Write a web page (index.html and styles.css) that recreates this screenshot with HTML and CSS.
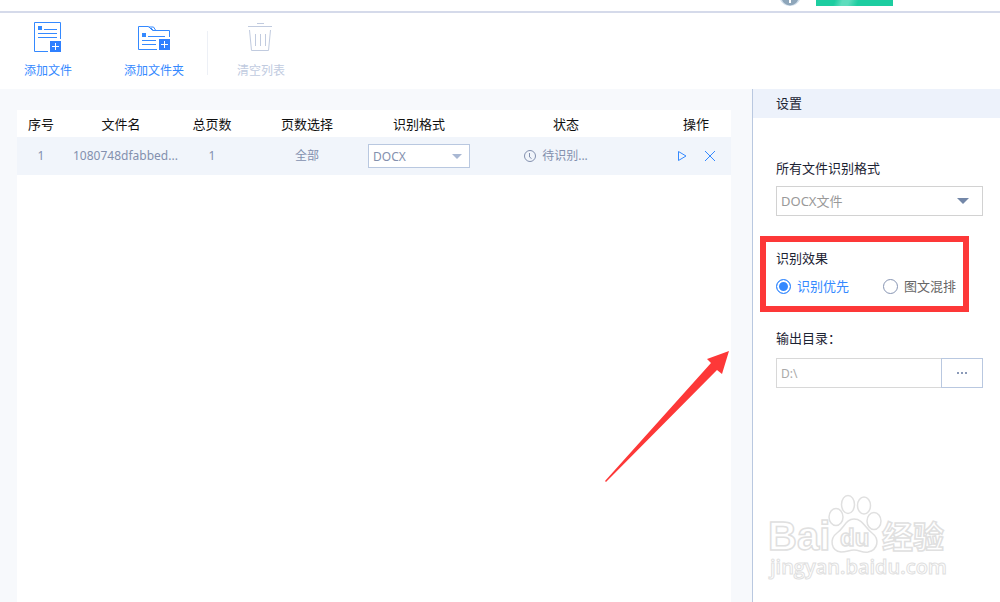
FILE: index.html
```html
<!DOCTYPE html>
<html lang="zh-CN">
<head>
    <meta charset="UTF-8">
    <meta name="viewport" content="width=device-width, initial-scale=1.0">
    <title>文件识别</title>
    <link rel="stylesheet" href="styles.css">
</head>
<body>
    <div class="app">
        <header class="top-bar">
            <svg class="top-badge" width="22" height="6" viewBox="0 0 22 6">
                <circle cx="11" cy="-5" r="11" fill="#d3e0ec"/>
                <circle cx="11" cy="-3" r="8.5" fill="#8ea6ba"/>
                <path d="M10 0h2v3h-2z" fill="#fff"/>
            </svg>
            <div class="top-banner"></div>
        </header>

        <nav class="toolbar">
            <button class="tool">
                <svg width="32" height="32" viewBox="0 0 32 32" fill="none" stroke="#3489ff">
                    <path d="M16 30.500H2.500V1.500H28.500V18"/>
                    <rect x="6" y="5" width="4" height="4" fill="#3489ff" stroke="none"/>
                    <path d="M12 8.500h13M6 12.500h19M6 16.500h19"/>
                    <rect x="18" y="20" width="11" height="11" fill="#2f80ff" stroke="none"/>
                    <path d="M20 25.500h7M23.500 22v7" stroke="#fff"/>
                </svg>
                <span>添加文件</span>
            </button>
            <button class="tool tool-folder">
                <svg width="32" height="32" viewBox="0 0 32 32" fill="none" stroke="#3489ff">
                    <path d="M19 28.500H0.500V5.500H10.500L14.500 9.500H31.500V16"/>
                    <path d="M10.500 6h5l2 3M13 7l2 2"/>
                    <rect x="4" y="12" width="4" height="4" fill="#3489ff" stroke="none"/>
                    <path d="M10 15.500h17M4 19.500h14M4 23.500h14"/>
                    <rect x="21" y="18" width="11" height="11" fill="#2f80ff" stroke="none"/>
                    <path d="M23 23.500h7M26.500 20v7" stroke="#fff"/>
                </svg>
                <span>添加文件夹</span>
            </button>
            <div class="divider"></div>
            <button class="tool" disabled>
                <svg width="32" height="32" viewBox="0 0 32 32" fill="none" stroke="#c1cbdf">
                    <path d="M12 2.500h7M3 5.500h24M4.500 9L6.500 29.500H23.500L25.500 9M10.500 13v12M15.500 13v12M20.500 13v12"/>
                </svg>
                <span>清空列表</span>
            </button>
        </nav>

        <div class="content">
            <main class="files">
                <div class="sheet">
                    <table class="file-table">
                        <colgroup>
                            <col class="col-index">
                            <col class="col-name">
                            <col class="col-total">
                            <col class="col-pages">
                            <col class="col-format">
                            <col class="col-status">
                            <col class="col-action">
                        </colgroup>
                        <thead>
                            <tr>
                                <th>序号</th>
                                <th>文件名</th>
                                <th>总页数</th>
                                <th>页数选择</th>
                                <th>识别格式</th>
                                <th>状态</th>
                                <th>操作</th>
                            </tr>
                        </thead>
                        <tbody>
                            <tr>
                                <td>1</td>
                                <td class="file-name">1080748dfabbed...</td>
                                <td>1</td>
                                <td>全部</td>
                                <td>
                                    <div class="select select-small">
                                        <select aria-label="识别格式">
                                            <option>DOCX</option>
                                        </select>
                                    </div>
                                </td>
                                <td>
                                    <div class="status">
                                        <svg width="12" height="12" viewBox="0 0 12 12" fill="none" stroke="#8390ae">
                                            <circle cx="6" cy="6" r="5.500"/>
                                            <path d="M5.500 3v4l2 1.500"/>
                                        </svg>
                                        <span>待识别...</span>
                                    </div>
                                </td>
                                <td>
                                    <div class="actions">
                                        <button aria-label="开始">
                                            <svg width="12" height="12" viewBox="0 0 12 12" fill="none" stroke="#3489ff">
                                                <path d="M2.500 1.500v9L10 6z"/>
                                            </svg>
                                        </button>
                                        <button aria-label="删除">
                                            <svg width="12" height="12" viewBox="0 0 12 12" fill="none" stroke="#3489ff">
                                                <path d="M1 1l10 10M11 1L1 11"/>
                                            </svg>
                                        </button>
                                    </div>
                                </td>
                            </tr>
                        </tbody>
                    </table>
                </div>
            </main>

            <aside class="settings">
                <h2>设置</h2>
                <form class="settings-form">
                    <div class="field">
                        <label for="format">所有文件识别格式</label>
                        <div class="select">
                            <select id="format">
                                <option>DOCX文件</option>
                            </select>
                        </div>
                    </div>

                    <div class="field effect" role="radiogroup" aria-labelledby="effect-title">
                        <span id="effect-title">识别效果</span>
                        <div class="radios">
                            <label class="radio"><input type="radio" name="effect" checked><span>识别优先</span></label>
                            <label class="radio"><input type="radio" name="effect"><span>图文混排</span></label>
                        </div>
                        <div class="highlight"></div>
                    </div>

                    <div class="field output">
                        <label for="output">输出目录：</label>
                        <div class="path">
                            <input id="output" type="text" value="D:\">
                            <button type="button" aria-label="浏览">
                                <svg width="12" height="4" viewBox="0 0 12 4" fill="#8b9ab8">
                                    <path d="M1 1h2v2H1zM5 1h2v2H5zM9 1h2v2H9z"/>
                                </svg>
                            </button>
                        </div>
                    </div>
                </form>
            </aside>
        </div>

        <svg class="arrow" width="126" height="134" viewBox="0 0 126 134">
            <path d="M124 1L102 9L106 13L0 131L1 132L112 20L117 24Z" fill="#fd3838"/>
        </svg>

        <svg class="watermark" width="184" height="92" viewBox="0 0 184 92">
            <g fill="#fff" stroke="#e0e0e0" stroke-width="1.500">
                <text class="mark-latin" x="1" y="58">Bai</text>
                <ellipse cx="69" cy="25" rx="7" ry="8.500"/>
                <ellipse cx="81" cy="12.500" rx="6.500" ry="9"/>
                <ellipse cx="97" cy="13.500" rx="6.500" ry="8.500"/>
                <ellipse cx="107" cy="29" rx="7" ry="8.500"/>
                <path d="M87 27C79 27 77 36 70 41C62 47 64 59 74 60C80 60 82 58 87 58C93 58 95 61 101 60C111 58 113 47 105 41C98 36 96 27 87 27Z"/>
                <text class="mark-du" x="73" y="54">du</text>
                <text class="mark-han" x="115" y="56">经验</text>
                <text class="mark-url" x="3" y="82">jingyan.baidu.com</text>
            </g>
        </svg>
    </div>
</body>
</html>
```
FILE: styles.css
```css
:root {
    --blue: #3489ff;
    --line: #b9c8e0;
    --muted: #8390ae;
    --red: #fd3838;
}

* {
    margin: 0;
    padding: 0;
    box-sizing: border-box;
}

body {
    background-color: #fff;
    color: #1c2333;
    font-family: "Noto Sans", "Noto Sans CJK SC", sans-serif;
    font-size: 13px;
    line-height: 20px;
}

button,
input,
select {
    font-family: inherit;
    font-size: inherit;
    color: inherit;
}

button {
    border: none;
    background: none;
    cursor: pointer;
}

svg {
    display: block;
}

.app {
    position: relative;
    display: flex;
    flex-direction: column;
    min-height: 100vh;
    overflow: hidden;
}

.top-bar {
    display: flex;
    justify-content: flex-end;
    gap: 15px;
    height: 13px;
    padding-right: 107px;
    border-bottom: 2px solid #d5daea;
}

.top-banner {
    width: 77px;
    height: 6px;
    background: linear-gradient(110deg, #1dcda0 24%, #5eddbd 34%, #5eddbd 42%, #1dcda0 54%);
}

/* toolbar */
.toolbar {
    display: flex;
    height: 76px;
    padding: 8px 24px;
}

.tool {
    display: flex;
    flex-direction: column;
    align-items: center;
    gap: 8px;
    color: var(--blue);
    font-size: 12px;
    line-height: 20px;
}

.tool:disabled {
    color: #c1cbdf;
    cursor: default;
}

.tool-folder {
    margin-left: 52px;
}

.divider {
    width: 1px;
    margin: 10px 29px 6px 23px;
    background-color: #edf0f6;
}

/* file list */
.content {
    display: flex;
    flex: 1;
}

.files {
    display: flex;
    flex: 1;
    padding: 21px 21px 0 17px;
    background-color: #f7f9fc;
}

.sheet {
    flex: 1;
    background-color: #fff;
}

.file-table {
    width: 100%;
    table-layout: fixed;
    border-collapse: collapse;
    text-align: center;
}

.col-index {
    width: 48px;
}

.col-name {
    width: 112px;
}

.col-total,
.col-action {
    width: 70px;
}

.col-pages {
    width: 120px;
}

.col-format {
    width: 104px;
}

.file-table th {
    height: 27px;
    color: #111;
    font-weight: normal;
}

.file-table td {
    height: 38px;
    background-color: #f1f5fb;
    color: var(--muted);
    font-size: 12px;
    white-space: nowrap;
}

.file-table .file-name {
    padding-left: 8px;
}

.status,
.actions {
    display: flex;
    align-items: center;
    justify-content: center;
}

.status {
    gap: 6px;
    padding-right: 20px;
}

.actions {
    gap: 16px;
}

/* drop-downs */
.select {
    position: relative;
}

.select select {
    display: block;
    width: 100%;
    height: 30px;
    padding: 0 4px;
    border: 1px solid #d2d2d2;
    border-radius: 0;
    background-color: #fff;
    color: #999;
    appearance: none;
}

.select::after {
    content: "";
    position: absolute;
    top: 12px;
    right: 14px;
    border: 6px solid transparent;
    border-top-color: #7387a8;
    border-bottom: none;
    pointer-events: none;
}

.select-small {
    margin: 0 1px;
}

.select-small select {
    height: 24px;
    border-color: var(--line);
    color: var(--muted);
}

.select-small::after {
    top: 10px;
    right: 8px;
    border-width: 5px;
    border-bottom: none;
    border-top-color: #a9b8d3;
}

/* settings */
.settings {
    flex: 0 0 248px;
    min-width: 0;
    border-left: 1px solid var(--line);
}

.settings h2 {
    height: 29px;
    padding-left: 23px;
    background-color: #edf2fb;
    font-size: 13px;
    font-weight: normal;
    line-height: 29px;
}

.settings-form {
    display: flex;
    flex-direction: column;
    gap: 32px;
    padding: 40px 17px 0 23px;
}

.field {
    display: flex;
    flex-direction: column;
    gap: 8px;
}

.output {
    gap: 10px;
}

.effect {
    position: relative;
}

.highlight {
    position: absolute;
    top: -12px;
    right: 14px;
    bottom: -16px;
    left: -16px;
    border: 6px solid var(--red);
    pointer-events: none;
}

.radios {
    display: flex;
    gap: 34px;
}

.radio {
    display: flex;
    align-items: center;
    gap: 6px;
    color: #666;
    white-space: nowrap;
}

.radio input {
    width: 15px;
    height: 15px;
    border: 1px solid #8795b3;
    border-radius: 50%;
    background-color: #fff;
    appearance: none;
}

.radio input:checked {
    border-color: var(--blue);
    background-color: var(--blue);
    box-shadow: inset 0 0 0 2px #fff;
}

.radio input:checked + span {
    color: var(--blue);
}

.path {
    display: flex;
    height: 30px;
}

.path input {
    flex: 1;
    min-width: 0;
    padding: 0 4px;
    border: 1px solid #d8d8d8;
    border-right: none;
    color: #aaa;
    font-size: 12px;
}

.path button {
    display: flex;
    align-items: center;
    justify-content: center;
    width: 42px;
    border: 1px solid var(--line);
}

/* overlays */
.arrow {
    position: absolute;
    top: 350px;
    left: 605px;
    pointer-events: none;
}

.watermark {
    position: absolute;
    top: 492px;
    right: 49px;
    pointer-events: none;
}

.mark-latin {
    font: bold 40px "Liberation Sans", sans-serif;
}

.mark-du {
    font: bold 24px "Liberation Sans", sans-serif;
}

.mark-han {
    font: bold 31px "Noto Sans CJK SC", sans-serif;
}

.mark-url {
    font: 600 20px "Open Sans", sans-serif;
    stroke-width: 1px;
}
```
